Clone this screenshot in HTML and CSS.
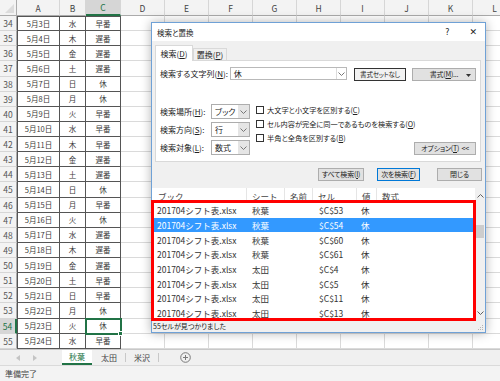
FILE: index.html
```html
<!DOCTYPE html>
<html lang="ja">
<head>
    <meta charset="UTF-8">
    <title>検索と置換 - 201704シフト表.xlsx</title>
    <link rel="stylesheet" href="styles.css">
</head>
<body>

<div class="excel">

    <!-- シート本体 -->
    <div class="sheet">
        <div class="col-heads">
            <div class="corner"></div>
            <div class="ch">A</div>
            <div class="ch">B</div>
            <div class="ch on">C</div>
            <div class="ch">D</div>
            <div class="ch">E</div>
            <div class="ch">F</div>
            <div class="ch">G</div>
            <div class="ch">H</div>
            <div class="ch">I</div>
            <div class="ch">J</div>
            <div class="ch">K</div>
            <div class="ch">L</div>
        </div>
        <div class="row"><div class="rn">34</div><div class="c a">5月3日</div><div class="c">水</div><div class="c">早番</div><div class="rest"></div></div>
        <div class="row"><div class="rn">35</div><div class="c a">5月4日</div><div class="c">木</div><div class="c">遅番</div><div class="rest"></div></div>
        <div class="row"><div class="rn">36</div><div class="c a">5月5日</div><div class="c">金</div><div class="c">遅番</div><div class="rest"></div></div>
        <div class="row"><div class="rn">37</div><div class="c a">5月6日</div><div class="c">土</div><div class="c">遅番</div><div class="rest"></div></div>
        <div class="row"><div class="rn">38</div><div class="c a">5月7日</div><div class="c">日</div><div class="c">休</div><div class="rest"></div></div>
        <div class="row"><div class="rn">39</div><div class="c a">5月8日</div><div class="c">月</div><div class="c">休</div><div class="rest"></div></div>
        <div class="row"><div class="rn">40</div><div class="c a">5月9日</div><div class="c">火</div><div class="c">早番</div><div class="rest"></div></div>
        <div class="row"><div class="rn">41</div><div class="c a">5月10日</div><div class="c">水</div><div class="c">早番</div><div class="rest"></div></div>
        <div class="row"><div class="rn">42</div><div class="c a">5月11日</div><div class="c">木</div><div class="c">早番</div><div class="rest"></div></div>
        <div class="row"><div class="rn">43</div><div class="c a">5月12日</div><div class="c">金</div><div class="c">遅番</div><div class="rest"></div></div>
        <div class="row"><div class="rn">44</div><div class="c a">5月13日</div><div class="c">土</div><div class="c">遅番</div><div class="rest"></div></div>
        <div class="row"><div class="rn">45</div><div class="c a">5月14日</div><div class="c">日</div><div class="c">休</div><div class="rest"></div></div>
        <div class="row"><div class="rn">46</div><div class="c a">5月15日</div><div class="c">月</div><div class="c">早番</div><div class="rest"></div></div>
        <div class="row"><div class="rn">47</div><div class="c a">5月16日</div><div class="c">火</div><div class="c">休</div><div class="rest"></div></div>
        <div class="row"><div class="rn">48</div><div class="c a">5月17日</div><div class="c">水</div><div class="c">遅番</div><div class="rest"></div></div>
        <div class="row"><div class="rn">49</div><div class="c a">5月18日</div><div class="c">木</div><div class="c">遅番</div><div class="rest"></div></div>
        <div class="row"><div class="rn">50</div><div class="c a">5月19日</div><div class="c">金</div><div class="c">遅番</div><div class="rest"></div></div>
        <div class="row"><div class="rn">51</div><div class="c a">5月20日</div><div class="c">土</div><div class="c">早番</div><div class="rest"></div></div>
        <div class="row"><div class="rn">52</div><div class="c a">5月21日</div><div class="c">日</div><div class="c">早番</div><div class="rest"></div></div>
        <div class="row"><div class="rn">53</div><div class="c a">5月22日</div><div class="c">月</div><div class="c">休</div><div class="rest"></div></div>
        <div class="row"><div class="rn on">54</div><div class="c a">5月23日</div><div class="c">火</div><div class="c sel">休</div><div class="rest"></div></div>
        <div class="row"><div class="rn">55</div><div class="c a">5月24日</div><div class="c">水</div><div class="c">早番</div><div class="rest"></div></div>
    </div>

    <!-- シート見出し -->
    <div class="sheet-tabs">
        <div class="tab-nav">
            <svg width="4" height="6" viewBox="0 0 4 6"><path d="M4 0 L0 3 L4 6 Z" fill="#c4c4c4"/></svg>
            <svg width="4" height="6" viewBox="0 0 4 6"><path d="M0 0 L4 3 L0 6 Z" fill="#c4c4c4"/></svg>
        </div>
        <div class="stab active">秋葉</div>
        <div class="stab">太田</div>
        <span class="tab-sep"></span>
        <div class="stab">米沢</div>
        <span class="tab-sep"></span>
        <div class="tab-add">
            <svg width="11" height="11" viewBox="0 0 11 11"><circle cx="5.5" cy="5.5" r="4.8" fill="none" stroke="#7a7a7a"/><path d="M5.5 3 V8 M3 5.5 H8" stroke="#7a7a7a"/></svg>
        </div>
    </div>

    <!-- ステータスバー -->
    <div class="status">準備完了</div>

    <!-- 検索と置換ダイアログ -->
    <div class="dialog">
        <div class="dlg-title">
            <span class="dlg-name">検索と置換</span>
            <span class="dlg-help">?</span>
            <span class="dlg-close">✕</span>
        </div>

        <div class="dlg-top">
            <div class="dlg-tabs">
                <span class="dtab active">検索(<u>D</u>)</span>
                <span class="dtab">置換(<u>P</u>)</span>
            </div>

            <div class="dlg-panel">
                <div class="find-row">
                    <label class="find-label">検索する文字列(<u>N</u>):</label>
                    <div class="combo wide">
                        <span class="combo-val">休</span>
                        <span class="combo-arrow light"><svg width="7" height="4" viewBox="0 0 7 4"><path d="M0.5 0.5 L3.5 3.5 L6.5 0.5" fill="none" stroke="#777"/></svg></span>
                    </div>
                    <button class="btn no-format">書式セットなし</button>
                    <button class="btn split">書式(<u>M</u>)...<svg class="caret" width="5" height="3" viewBox="0 0 5 3"><path d="M0 0 H5 L2.5 3 Z" fill="#333"/></svg></button>
                </div>

                <div class="opts">
                    <div class="opt-fields">
                        <div class="field">
                            <label>検索場所(<u>H</u>):</label>
                            <div class="combo"><span class="combo-val">ブック</span><span class="combo-arrow"><svg width="7" height="4" viewBox="0 0 7 4"><path d="M0.5 0.5 L3.5 3.5 L6.5 0.5" fill="none" stroke="#777"/></svg></span></div>
                        </div>
                        <div class="field">
                            <label>検索方向(<u>S</u>):</label>
                            <div class="combo"><span class="combo-val">行</span><span class="combo-arrow"><svg width="7" height="4" viewBox="0 0 7 4"><path d="M0.5 0.5 L3.5 3.5 L6.5 0.5" fill="none" stroke="#777"/></svg></span></div>
                        </div>
                        <div class="field">
                            <label>検索対象(<u>L</u>):</label>
                            <div class="combo"><span class="combo-val">数式</span><span class="combo-arrow"><svg width="7" height="4" viewBox="0 0 7 4"><path d="M0.5 0.5 L3.5 3.5 L6.5 0.5" fill="none" stroke="#777"/></svg></span></div>
                        </div>
                    </div>
                    <div class="checks">
                        <div class="check"><span class="box"></span>大文字と小文字を区別する(<u>C</u>)</div>
                        <div class="check"><span class="box"></span>セル内容が完全に同一であるものを検索する(<u>O</u>)</div>
                        <div class="check"><span class="box"></span>半角と全角を区別する(<u>B</u>)</div>
                    </div>
                    <button class="btn opt-btn">オプション(<u>T</u>) &lt;&lt;</button>
                </div>
            </div>

            <div class="dlg-buttons">
                <button class="btn find-all">すべて検索(<u>I</u>)</button>
                <button class="btn find-next">次を検索(<u>F</u>)</button>
                <button class="btn close">閉じる</button>
            </div>
        </div>

        <!-- 検索結果 -->
        <div class="results">
            <div class="res-table">
                <div class="res-head"><span>ブック</span><span>シート</span><span>名前</span><span>セル</span><span>値</span><span>数式</span></div>
                <div class="res-row"><span>201704シフト表.xlsx</span><span>秋葉</span><span></span><span>$C$53</span><span>休</span><span></span></div>
                <div class="res-row sel"><span>201704シフト表.xlsx</span><span>秋葉</span><span></span><span>$C$54</span><span>休</span><span></span></div>
                <div class="res-row"><span>201704シフト表.xlsx</span><span>秋葉</span><span></span><span>$C$60</span><span>休</span><span></span></div>
                <div class="res-row"><span>201704シフト表.xlsx</span><span>秋葉</span><span></span><span>$C$61</span><span>休</span><span></span></div>
                <div class="res-row"><span>201704シフト表.xlsx</span><span>太田</span><span></span><span>$C$4</span><span>休</span><span></span></div>
                <div class="res-row"><span>201704シフト表.xlsx</span><span>太田</span><span></span><span>$C$5</span><span>休</span><span></span></div>
                <div class="res-row"><span>201704シフト表.xlsx</span><span>太田</span><span></span><span>$C$11</span><span>休</span><span></span></div>
                <div class="res-row"><span>201704シフト表.xlsx</span><span>太田</span><span></span><span>$C$13</span><span>休</span><span></span></div>
            </div>
            <div class="scrollbar">
                <span class="sb-arrow"><svg width="7" height="4" viewBox="0 0 7 4"><path d="M0.5 3.5 L3.5 0.5 L6.5 3.5" fill="none" stroke="#606060"/></svg></span>
                <span class="sb-thumb"></span>
                <span class="sb-arrow bottom"><svg width="7" height="4" viewBox="0 0 7 4"><path d="M0.5 0.5 L3.5 3.5 L6.5 0.5" fill="none" stroke="#606060"/></svg></span>
            </div>
        </div>

        <div class="dlg-status">
            55セルが見つかりました
            <svg class="grip" width="7" height="7" viewBox="0 0 7 7"><g fill="#b5b5b5"><rect x="5" y="1" width="1" height="1"/><rect x="3" y="3" width="1" height="1"/><rect x="5" y="3" width="1" height="1"/><rect x="1" y="5" width="1" height="1"/><rect x="3" y="5" width="1" height="1"/><rect x="5" y="5" width="1" height="1"/></g></svg>
        </div>
    </div>

    <!-- 赤枠の注記 -->
    <div class="mark"></div>

</div>

</body>
</html>
```

FILE: styles.css
```css
/* 全体 */
body {
    margin: 0;
    font-family: "Noto Sans CJK JP", "Noto Sans", sans-serif;
    color: #333;
}

.excel {
    position: relative;
    width: 500px;
    height: 381px;
    overflow: hidden;
    background: #fff;
}

/* シート */
.sheet {
    display: grid;
    grid-template-columns: 17px 43px 26px 35px repeat(9, 44px);
    grid-template-rows: 16px repeat(22, 15.14px);
    height: 349px;
    font-size: 7.5px;
}

.row,
.col-heads {
    display: contents;
}

.corner {
    position: relative;
    background: #f3f3f3;
    border-right: 1px solid #ababab;
    border-bottom: 1px solid #ababab;
    box-sizing: border-box;
}

.corner::after {
    content: "";
    position: absolute;
    right: 2px;
    bottom: 2px;
    border-left: 9px solid transparent;
    border-bottom: 9px solid #dcdcdc;
}

.ch {
    display: flex;
    align-items: center;
    justify-content: center;
    background: #f3f3f3;
    border-right: 1px solid #d6d6d6;
    border-bottom: 1px solid #ababab;
    box-sizing: border-box;
    font-size: 8.5px;
    color: #444;
}

.ch.on {
    background: #d6d6d6;
    color: #217346;
    border-bottom: 2px solid #217346;
}

.rn {
    display: flex;
    align-items: center;
    justify-content: center;
    background: #f3f3f3;
    border-right: 1px solid #ababab;
    border-bottom: 1px solid #d6d6d6;
    box-sizing: border-box;
    font-size: 8.5px;
    color: #555;
}

.rn.on {
    background: #d6d6d6;
    color: #217346;
    border-right: 2px solid #217346;
}

.c {
    display: flex;
    align-items: center;
    justify-content: center;
    border-right: 1px solid #555;
    border-bottom: 1px solid #555;
    box-sizing: border-box;
    color: #3a3a3a;
    background: #fff;
}

.c.a {
    border-left: 1px solid #555;
}

.col-heads + .row .c {
    border-top: 1px solid #555;
}

.c.sel {
    position: relative;
    outline: 2px solid #217346;
    outline-offset: -1px;
    z-index: 1;
}

.c.sel::after {
    content: "";
    position: absolute;
    right: -3px;
    bottom: -3px;
    width: 3px;
    height: 3px;
    background: #217346;
    border: 1px solid #fff;
}

.rest {
    grid-column: 5 / -1;
    border-bottom: 1px solid #dadada;
    box-sizing: border-box;
    background: repeating-linear-gradient(90deg, transparent 0 43px, #dadada 43px 44px);
}

/* シート見出し */
.sheet-tabs {
    display: flex;
    align-items: stretch;
    height: 16px;
    box-sizing: border-box;
    background: #f0f0f0;
    border-top: 1px solid #c8c8c8;
    font-size: 8px;
}

.tab-nav {
    width: 62px;
    display: flex;
    align-items: center;
    justify-content: center;
    gap: 13px;
    padding-right: 10px;
    box-sizing: border-box;
}

.stab {
    width: 28px;
    display: flex;
    align-items: center;
    justify-content: center;
    color: #444;
}

.stab.active {
    width: 30px;
    margin-right: 3px;
    background: #fff;
    color: #217346;
    border-bottom: 2px solid #217346;
    box-sizing: border-box;
}

.tab-sep {
    width: 1px;
    margin: 3px 2px;
    background: #c8c8c8;
}

.tab-add {
    display: flex;
    align-items: center;
    margin-left: 19px;
}

/* ステータスバー */
.status {
    height: 16px;
    box-sizing: border-box;
    padding-left: 5px;
    display: flex;
    align-items: center;
    background: #f3f3f3;
    border-top: 1px solid #dadada;
    font-size: 8px;
    color: #444;
}

/* ダイアログ */
.dialog {
    position: absolute;
    left: 151px;
    top: 22px;
    width: 335px;
    height: 311px;
    box-sizing: border-box;
    border: 1px solid #6fa1d6;
    background: #f0f0f0;
    box-shadow: 0 0 10px rgba(0, 0, 0, 0.3);
    display: flex;
    flex-direction: column;
    font-size: 8px;
    font-feature-settings: "palt" 1;
    color: #222;
}

.dlg-title {
    height: 18px;
    flex-shrink: 0;
    display: flex;
    align-items: center;
    padding: 0 8px 0 5px;
    background: #fff;
    font-size: 7.5px;
}

.dlg-help {
    margin-left: auto;
    font-family: "DejaVu Sans", sans-serif;
    font-size: 8px;
}

.dlg-close {
    margin-left: 20px;
    font-family: "DejaVu Sans", sans-serif;
    font-size: 9px;
}

.dlg-top {
    padding: 4px 3px 0 3px;
}

.dlg-tabs {
    display: flex;
    align-items: flex-end;
    height: 15px;
}

.dtab {
    height: 12px;
    width: 34px;
    box-sizing: border-box;
    display: flex;
    align-items: center;
    justify-content: center;
    border: 1px solid #d9d9d9;
    border-bottom: none;
    background: #f0f0f0;
}

.dtab.active {
    position: relative;
    z-index: 1;
    width: 38px;
    height: 16px;
    margin-bottom: -1px;
    background: #fff;
}

.dlg-panel {
    height: 102px;
    margin-right: 1px;
    box-sizing: border-box;
    padding: 6px 4px 0 4px;
    background: #fff;
    border: 1px solid #d9d9d9;
}

.find-row {
    display: flex;
    align-items: flex-start;
    height: 14px;
}

.find-label {
    width: 70px;
    line-height: 13px;
}

.combo {
    display: flex;
    width: 39px;
    height: 15px;
    box-sizing: border-box;
    border: 1px solid #adadad;
    background: #fff;
}

.combo.wide {
    width: 118px;
    height: 13px;
    border-color: #b9b9b9;
}

.combo-val {
    flex: 1;
    display: flex;
    align-items: center;
    padding-left: 3px;
}

.combo-arrow {
    width: 11px;
    display: flex;
    align-items: center;
    justify-content: center;
    background: #e5e5e5;
}

.combo-arrow.light {
    width: 9px;
    background: #fff;
    border-left: 1px solid #dcdcdc;
}

.btn {
    flex-shrink: 0;
    font: inherit;
    font-size: 7px;
    letter-spacing: -0.2px;
    font-feature-settings: "palt" 1;
    line-height: 1;
    white-space: nowrap;
    color: #222;
    height: 13px;
    padding: 0;
    box-sizing: border-box;
    border: 1px solid #adadad;
    background: #e1e1e1;
    display: flex;
    align-items: center;
    justify-content: center;
}

.btn.no-format {
    width: 52px;
    margin: 1px 0 0 7px;
    border-color: #333;
    background: #f2f2f2;
    font-size: 6.5px;
}

.btn.split {
    position: relative;
    width: 64px;
    margin: 1px 0 0 6px;
}

.btn .caret {
    position: absolute;
    right: 4px;
    top: 5px;
}

.opts {
    display: flex;
    align-items: flex-start;
    height: 51px;
    margin-top: 23px;
}

.opt-fields {
    display: flex;
    flex-direction: column;
    gap: 3px;
    flex-shrink: 0;
}

.field {
    display: flex;
    align-items: center;
    height: 15px;
}

.field label {
    width: 51px;
}

.checks {
    display: flex;
    flex-direction: column;
    margin: -1px 0 0 6px;
    min-width: 0;
    font-size: 7.2px;
}

.check {
    height: 14px;
    display: flex;
    align-items: center;
    white-space: nowrap;
}

.box {
    width: 8px;
    height: 8px;
    flex-shrink: 0;
    box-sizing: border-box;
    border: 1px solid #333;
    margin-right: 3px;
    background: #fff;
}

.btn.opt-btn {
    width: 62px;
    margin-left: auto;
    align-self: flex-end;
    word-spacing: 1px;
}

.dlg-buttons {
    display: flex;
    justify-content: flex-end;
    margin-top: 6px;
    height: 13px;
}

.btn.find-all {
    width: 46px;
}

.btn.find-next {
    width: 43px;
    margin-left: 13px;
    border-color: #0078d7;
}

.btn.close {
    width: 45px;
    margin-left: 17px;
}

/* 検索結果リスト */
.results {
    display: flex;
    height: 132px;
    margin-top: 7px;
    background: #fff;
    flex-shrink: 0;
}

.res-table {
    flex: 1;
    font-size: 8.5px;
    font-feature-settings: normal;
}

.res-head,
.res-row {
    display: grid;
    grid-template-columns: 95px 38px 28px 44px 20px 1fr;
    align-items: center;
    white-space: nowrap;
}

.res-head {
    height: 15px;
    color: #444;
}

.res-head span {
    height: 100%;
    display: flex;
    align-items: center;
    padding-left: 5px;
    border-right: 1px solid #e5e5e5;
    box-sizing: border-box;
}

.res-head span:first-child {
    padding-left: 6px;
}

.res-head span:last-child {
    border-right: none;
}

.res-row {
    height: 14.7px;
    color: #333;
}

.res-row span {
    padding-left: 5px;
}

.res-row span:nth-child(4) {
    padding-left: 6px;
}

.res-row span:nth-child(5) {
    padding-left: 4px;
}

.res-row.sel {
    background: #3399ff;
    color: #fff;
}

.scrollbar {
    width: 10px;
    display: flex;
    flex-direction: column;
    background: #f0f0f0;
}

.sb-arrow {
    height: 15px;
    display: flex;
    align-items: center;
    justify-content: center;
}

.sb-arrow.bottom {
    margin-top: auto;
}

.sb-thumb {
    height: 13px;
    margin: 22px 1px 0 0;
    background: #cdcdcd;
}

.dlg-status {
    position: relative;
    height: 12px;
    display: flex;
    align-items: center;
    padding-left: 1px;
    font-size: 7px;
}

.grip {
    position: absolute;
    right: 1px;
    bottom: 1px;
}

/* 赤枠 */
.mark {
    position: absolute;
    left: 151px;
    top: 200px;
    width: 325px;
    height: 121px;
    box-sizing: border-box;
    border: 3px solid #ff0000;
}
```
